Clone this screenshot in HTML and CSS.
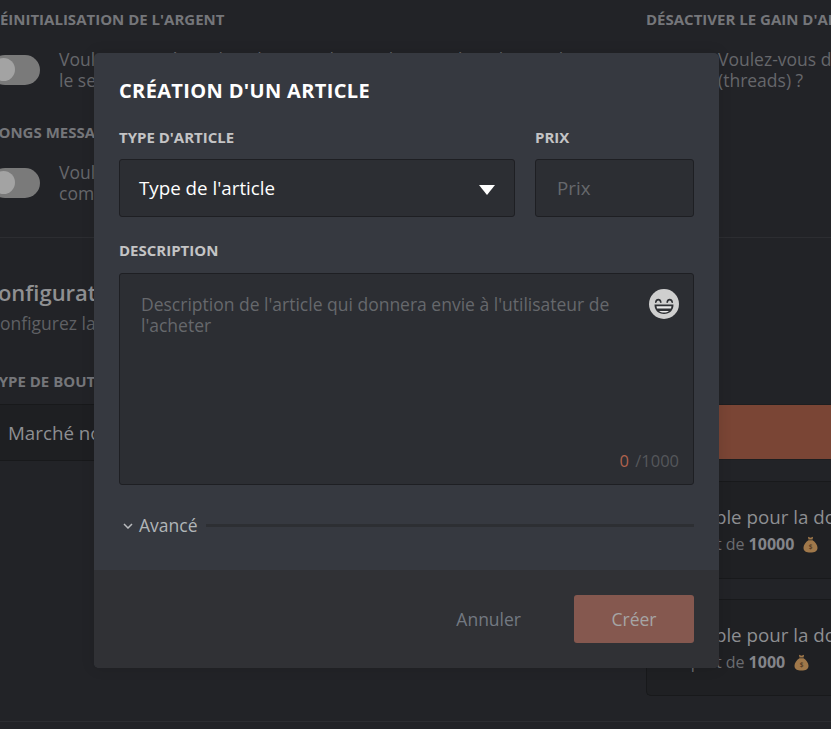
FILE: index.html
```html
<!DOCTYPE html>
<html lang="fr">
<head>
<meta charset="utf-8">
<title>Création d'un article</title>
<link rel="stylesheet" href="styles.css">
</head>
<body>
<div class="page">
  <section class="settings">
    <div class="col col-left">
      <h3 class="cap">Réinitialisation de l'argent</h3>
      <div class="opt">
        <span class="toggle"><span class="knob"></span></span>
        <p>Voulez-vous réinitialiser l'argent de tous les membres lorsqu'ils quittent<br>le serveur ?</p>
      </div>
      <h3 class="cap second">Longs messages</h3>
      <div class="opt">
        <span class="toggle"><span class="knob"></span></span>
        <p>Voulez-vous activer le gain d'argent pour les longs messages<br>comptant plus de mots ?</p>
      </div>
    </div>
    <div class="col col-right">
      <h3 class="cap">Désactiver le gain d'argent</h3>
      <div class="opt opt-right">
        <span class="toggle"><span class="knob"></span></span>
        <p>Voulez-vous désactiver le gain<br>(threads) ?</p>
      </div>
    </div>
  </section>
  <section class="market">
    <div class="col col-left">
      <h2 class="title">Configuration du marché</h2>
      <p class="sub">Configurez la boutique du serveur</p>
      <h3 class="cap third">Type de bouton</h3>
      <div class="dark-select">Marché noir</div>
    </div>
    <div class="col col-right shop">
      <div class="red-btn"></div>
      <div class="card">
        <div class="card-title">Utilisable pour la donation</div>
        <div class="card-sub">Un prêt de <b>10000</b>
          <svg class="bag" viewBox="0 0 14 16"><path d="M4.6 0.6 7 1.6 9.4 0.6 8.9 3.2H5.1Z M5 3.9H9C11.6 5.6 13.6 8.3 13.6 11 13.6 14.2 11 15.6 7 15.6 3 15.6.4 14.2.4 11 .4 8.3 2.4 5.6 5 3.9Z" fill="#a0784a"/><text x="7" y="12.6" class="bag-s">$</text></svg>
        </div>
      </div>
      <div class="card">
        <div class="card-title">Utilisable pour la donation</div>
        <div class="card-sub">Un prêt de <b>1000</b>
          <svg class="bag" viewBox="0 0 14 16"><path d="M4.6 0.6 7 1.6 9.4 0.6 8.9 3.2H5.1Z M5 3.9H9C11.6 5.6 13.6 8.3 13.6 11 13.6 14.2 11 15.6 7 15.6 3 15.6.4 14.2.4 11 .4 8.3 2.4 5.6 5 3.9Z" fill="#a0784a"/><text x="7" y="12.6" class="bag-s">$</text></svg>
        </div>
      </div>
    </div>
  </section>
</div>

<div class="modal">
  <div class="modal-body">
    <h2 class="modal-title">Création d'un article</h2>
    <div class="row">
      <div class="field grow">
        <label class="label">Type d'article</label>
        <div class="box select">
          <span class="select-text">Type de l'article</span>
          <svg class="caret" viewBox="0 0 16 10"><path d="M0 0H16L8 10Z" fill="#fff"/></svg>
        </div>
      </div>
      <div class="field price">
        <label class="label">Prix</label>
        <div class="box input">Prix</div>
      </div>
    </div>
    <label class="label label-desc">Description</label>
    <div class="box area">
      <p class="ph">Description de l'article qui donnera envie à l'utilisateur de l'acheter</p>
      <svg class="emoji" viewBox="0 0 30 30">
        <circle cx="15" cy="15" r="15" fill="#cfcfcf"/>
        <path d="M6.8 13.2C7.4 9.8 11.2 9.8 11.8 13.2M18.2 13.2C18.8 9.8 22.6 9.8 23.2 13.2" fill="none" stroke="#2e3034" stroke-width="1.6" stroke-linecap="round"/>
        <path d="M5.5 15.6H24.5C24.5 21.6 20.6 25 15 25 9.4 25 5.5 21.6 5.5 15.6Z" fill="#2e3034"/>
        <path d="M7.5 17.2H22.5L22 19.6H8Z" fill="#e8e8e8"/>
        <path d="M10 22H20C18.6 23.2 17 23.6 15 23.6 13 23.6 11.4 23.2 10 22Z" fill="#e8e8e8"/>
      </svg>
      <div class="count"><span class="zero">0</span> /1000</div>
    </div>
    <div class="adv">
      <svg class="chev" viewBox="0 0 10 6"><path d="M1 1 5 5 9 1" fill="none" stroke="#b9bbbe" stroke-width="1.5"/></svg>
      <span class="adv-text">Avancé</span>
      <span class="adv-line"></span>
    </div>
  </div>
  <div class="modal-foot">
    <span class="cancel">Annuler</span>
    <span class="create">Créer</span>
  </div>
</div>
</body>
</html>
```

FILE: styles.css
```css
* { box-sizing: border-box; }
html, body { margin: 0; height: 100%; }
body {
  background: #222327;
  font-family: "Open Sans", "Liberation Sans", sans-serif;
  overflow: hidden;
  position: relative;
}
h2, h3, p { margin: 0; font-weight: normal; }

.page { width: 831px; height: 729px; overflow: hidden; }

.settings, .market { display: flex; margin-left: -134px; }
.settings { height: 238px; padding-top: 10px; border-bottom: 1px solid #2c2d31; }
.market { height: 484px; border-bottom: 1px solid #2c2d31; padding-top: 40px; }
.col-left { width: 780px; flex: none; }
.col-right { width: 400px; flex: none; }

.cap {
  font-size: 15px;
  line-height: 19px;
  font-weight: 700;
  text-transform: uppercase;
  color: #75767a;
  white-space: nowrap;
}
.col-left .cap { padding-left: 124px; }
.settings .col-left .cap.second { margin-top: 33px; }
.market .col-left .cap.third { margin-top: 38px; }

.opt { display: flex; margin-top: 20px; padding-left: 124px; gap: 19px; align-items: center; }
.opt p { font-size: 17.5px; line-height: 20.5px; color: #66676b; white-space: nowrap; }
.opt-right { padding-left: 0; gap: 22px; }
.toggle {
  width: 50px; height: 30px; border-radius: 15px;
  background: #7a7a7a;
  flex: none;
  position: relative;
}
.knob {
  position: absolute; left: 2px; top: 3px;
  width: 23px; height: 23px; border-radius: 50%;
  background: #a3a3a3;
}
.col-right .toggle { visibility: hidden; }

.title { font-size: 22px; line-height: 28px; font-weight: 600; color: #8f9092; padding-left: 118px; }
.sub { font-size: 17.5px; line-height: 22px; color: #5f6064; padding-left: 123px; margin-top: 6px; }
.dark-select {
  margin-top: 13px;
  height: 57px;
  padding-left: 141px;
  background: #1e1f22;
  border: 1px solid #18191b;
  font-size: 18.75px;
  line-height: 55px;
  color: #8e8f92;
  white-space: nowrap;
}

.shop { padding-top: 126px; }
.red-btn { height: 56px; background: #7a4535; border: 1px solid #1d1e20; border-right: 0; }
.card {
  margin-top: 21px;
  height: 98px;
  background: #1f2023;
  border: 1px solid #18191b;
  border-right: 0;
  border-radius: 5px 0 0 5px;
  padding: 22px 0 0 18px;
  white-space: nowrap;
}
.card + .card { margin-top: 20px; height: 97px; }
.card-title { font-size: 18.75px; line-height: 25px; color: #8e8f92; margin-left: -4px; }
.card-sub { font-size: 16px; line-height: 22px; color: #6b6c70; margin-top: 4px; display: flex; align-items: center; gap: 4px; }
.card-sub b { font-weight: 700; color: #84858a; }
.bag { width: 15px; height: 17px; margin-left: 5px; }
.bag-s { font-size: 6px; font-weight: 700; fill: #5a4026; text-anchor: middle; font-family: "Open Sans", sans-serif; }

.modal {
  position: absolute;
  left: 94px; top: 53px;
  width: 625px; height: 615px;
  background: #363940;
  border-radius: 5px;
  overflow: hidden;
  display: flex;
  flex-direction: column;
  box-shadow: 0 0 14px rgba(0,0,0,.12);
}
.modal-body { flex: 1; padding: 25px 25px 0; }
.modal-title {
  font-size: 20px; line-height: 26px; font-weight: 700; color: #fff;
  letter-spacing: .35px;
  text-transform: uppercase; margin-bottom: 24px;
}
.row { display: flex; gap: 20px; margin-bottom: 24px; }
.field { display: flex; flex-direction: column; }
.grow { flex: 1; }
.price { width: 159px; }
.label {
  display: block;
  font-size: 15px; line-height: 19px; font-weight: 700;
  text-transform: uppercase; color: #c4c4c5;
  margin-bottom: 12px;
}
.label-desc { margin-bottom: 13px; }
.box {
  background: #2c2e33;
  border: 1px solid #1e1f23;
  border-radius: 3px;
}
.select {
  height: 58px; display: flex; align-items: center; justify-content: space-between;
  padding: 0 19px; font-size: 18.75px; color: #fff;
}
.select-text { padding-bottom: 2px; }
.caret { width: 16px; height: 10px; margin-top: 3px; }
.input { height: 58px; padding-left: 21px; font-size: 18.75px; line-height: 56px; color: #66686c; }
.area { height: 212px; position: relative; padding: 20px 80px 0 21px; }
.ph { font-size: 17.5px; line-height: 20.5px; color: #66686c; }
.emoji { position: absolute; left: 529px; top: 15px; width: 30px; height: 30px; }
.count { position: absolute; right: 14px; bottom: 12px; font-size: 16.5px; line-height: 22px; color: #55575b; }
.zero { color: #b0624d; margin-right: 2px; }

.adv { display: flex; align-items: center; margin-top: 29px; height: 22px; }
.chev { width: 10px; height: 6px; margin: 1px 6px 0 4px; flex: none; }
.adv-text { font-size: 17.5px; line-height: 22px; color: #b1b6b8; }
.adv-line { flex: 1; height: 3px; background: #2d2f33; margin-left: 9px; }

.modal-foot {
  height: 98px; flex: none;
  background: #303135;
  display: flex; align-items: center; justify-content: flex-end;
  padding-right: 25px;
}
.cancel { font-size: 17.5px; color: #737982; margin-right: 53px; }
.create {
  width: 120px; height: 48px; border-radius: 3px;
  background: #85584f; color: #a5a5a5;
  font-size: 17.5px; line-height: 48px; text-align: center;
}
```
